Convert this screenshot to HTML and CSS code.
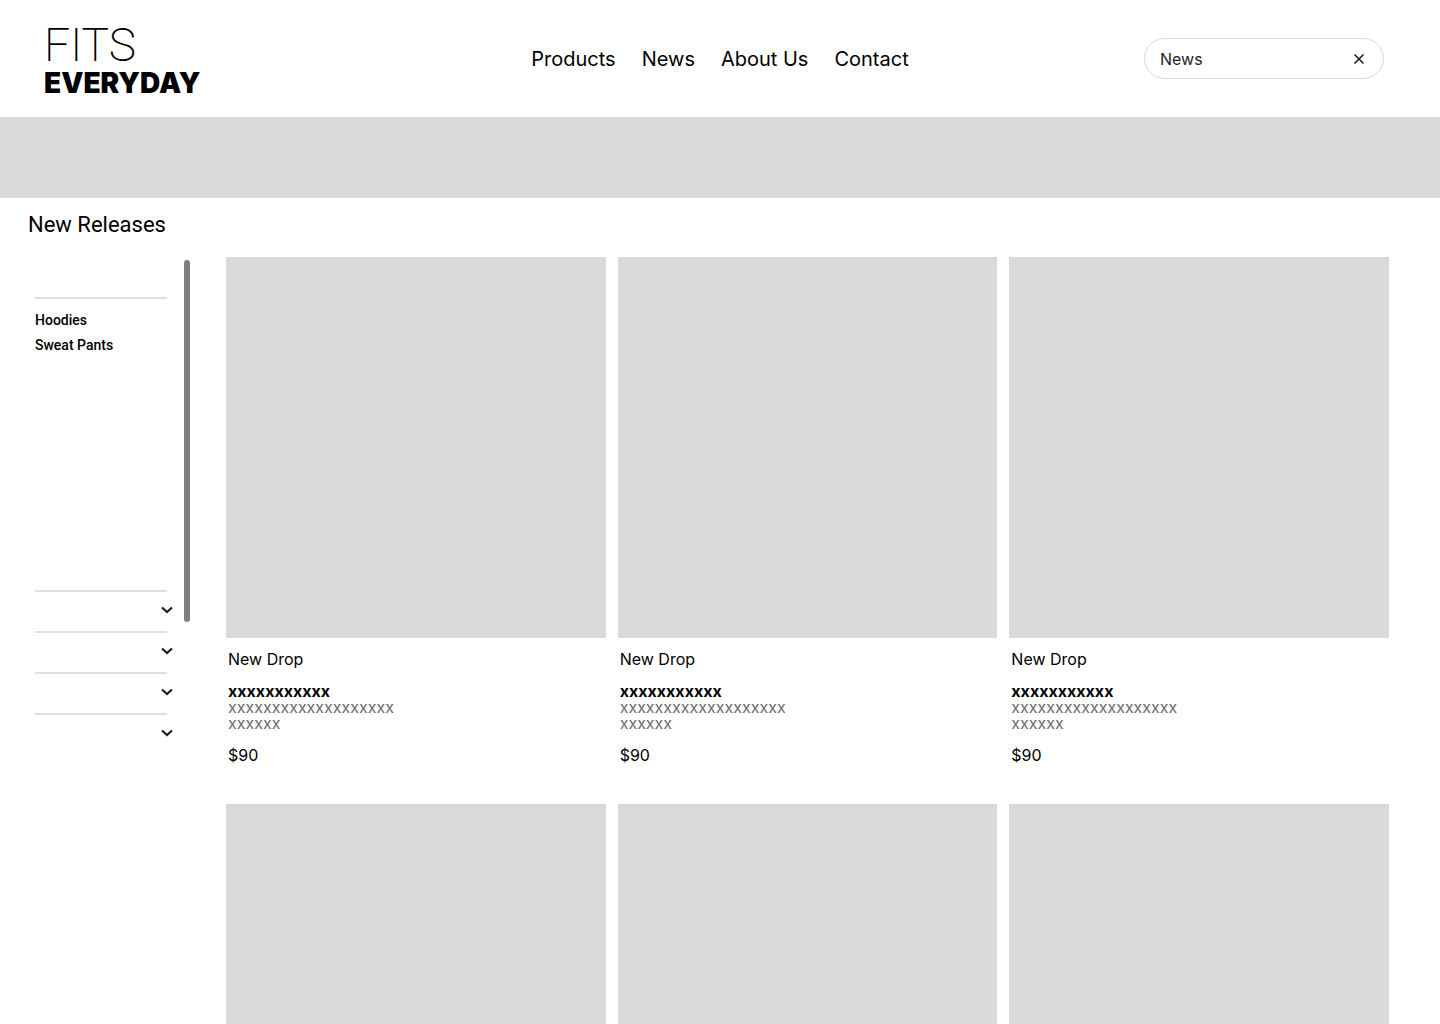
FILE: index.html
```
<!DOCTYPE html>
<html lang="en">
<head>
  <meta charset="UTF-8" />
  <meta name="viewport" content="width=device-width, initial-scale=1.0" />
  <title>Fits Everyday</title>
  <link rel="stylesheet" href="styles.css">
</head>
<body>

  <header class="header">
    <a class="logo" href="#">
      <span class="logo-top">FITS</span>
      <span class="logo-bottom">EVERYDAY</span>
    </a>

    <nav class="nav">
      <a href="#">Products</a>
      <a href="#">News</a>
      <a href="#">About Us</a>
      <a href="#">Contact</a>
    </nav>

    <form class="search">
      <input type="text" value="News" aria-label="Search">
      <button type="reset" aria-label="Clear search">
        <svg width="16" height="16" viewBox="0 0 16 16" fill="none" stroke="#1e1e1e" stroke-width="1.6">
          <path d="M3.5 3.5l9 9M12.5 3.5l-9 9" />
        </svg>
      </button>
    </form>
  </header>

  <div class="banner"></div>

  <main>
    <h1>New Releases</h1>

    <div class="content">
      <aside class="sidebar">
        <div class="filters">
          <section class="filter-open">
            <ul>
              <li><a href="#">Hoodies</a></li>
              <li><a href="#">Sweat Pants</a></li>
            </ul>
          </section>
          <button class="filter" aria-label="Expand filter">
            <svg width="12" height="8" viewBox="0 0 12 8"><path d="M1 1.5l5 4.6 5-4.6" /></svg>
          </button>
          <button class="filter" aria-label="Expand filter">
            <svg width="12" height="8" viewBox="0 0 12 8"><path d="M1 1.5l5 4.6 5-4.6" /></svg>
          </button>
          <button class="filter" aria-label="Expand filter">
            <svg width="12" height="8" viewBox="0 0 12 8"><path d="M1 1.5l5 4.6 5-4.6" /></svg>
          </button>
          <button class="filter" aria-label="Expand filter">
            <svg width="12" height="8" viewBox="0 0 12 8"><path d="M1 1.5l5 4.6 5-4.6" /></svg>
          </button>
        </div>
        <div class="scrollbar"></div>
      </aside>

      <div class="products">
        <article class="card">
          <div class="card-image"></div>
          <div class="card-info">
            <p>New Drop</p>
            <h2>xxxxxxxxxxx</h2>
            <p class="description">xxxxxxxxxxxxxxxxxxx<br>xxxxxx</p>
            <p>$90</p>
          </div>
        </article>
        <article class="card">
          <div class="card-image"></div>
          <div class="card-info">
            <p>New Drop</p>
            <h2>xxxxxxxxxxx</h2>
            <p class="description">xxxxxxxxxxxxxxxxxxx<br>xxxxxx</p>
            <p>$90</p>
          </div>
        </article>
        <article class="card">
          <div class="card-image"></div>
          <div class="card-info">
            <p>New Drop</p>
            <h2>xxxxxxxxxxx</h2>
            <p class="description">xxxxxxxxxxxxxxxxxxx<br>xxxxxx</p>
            <p>$90</p>
          </div>
        </article>
        <article class="card">
          <div class="card-image"></div>
        </article>
        <article class="card">
          <div class="card-image"></div>
        </article>
        <article class="card">
          <div class="card-image"></div>
        </article>
      </div>
    </div>
  </main>

</body>
</html>
```
FILE: styles.css
```
* {
  margin: 0;
  padding: 0;
  box-sizing: border-box;
}

body {
  font-family: 'Inter', sans-serif;
  font-size: 16px;
  background: #fff;
  color: #000;
}

a {
  color: inherit;
  text-decoration: none;
}

button {
  background: none;
  border: none;
  cursor: pointer;
}

/* Header */
.header {
  display: grid;
  grid-template-columns: 1fr auto 1fr;
  align-items: center;
  padding: 18px 44px;
  min-height: 117px;
}

.logo {
  display: flex;
  flex-direction: column;
}

.logo-top {
  font-family: 'Roboto', sans-serif;
  font-size: 46px;
  font-weight: 200;
  line-height: 48px;
}

.logo-bottom {
  font-size: 28px;
  font-weight: 900;
  line-height: 28px;
}

.nav {
  display: flex;
  gap: 26px;
  font-size: 20px;
}

.search {
  display: flex;
  align-items: center;
  justify-self: end;
  width: 240px;
  height: 41px;
  margin-right: 12px;
  padding: 0 16px 0 15px;
  border: 1px solid #d9d9d9;
  border-radius: 21px;
}

.search input {
  flex: 1;
  min-width: 0;
  border: none;
  outline: none;
  background: none;
  font: inherit;
  color: #1e1e1e;
}

.search button {
  display: flex;
}

.banner {
  height: 81px;
  background: #d9d9d9;
}

h1 {
  padding: 13px 28px 18px;
  font-family: 'Roboto', sans-serif;
  font-size: 22px;
  font-weight: 400;
  line-height: 28px;
}

.content {
  display: flex;
  align-items: flex-start;
  gap: 36px;
  padding: 0 51px 0 35px;
}

/* Sidebar */
.sidebar {
  display: flex;
  gap: 11px;
  flex-shrink: 0;
  padding-top: 3px;
}

.filters {
  width: 138px;
  padding-top: 37px;
}

/* divider is a little shorter than the row */
.filter-open::before,
.filter::before {
  content: '';
  display: block;
  width: 132px;
  height: 2px;
  background: #e0e0e0;
}

.filter-open {
  min-height: 293px;
}

.filter-open ul {
  padding-top: 9px;
  list-style: none;
  font-family: 'Roboto', sans-serif;
  font-size: 14px;
  font-weight: 500;
  line-height: 25px;
}

.filter {
  display: flex;
  flex-direction: column;
  gap: 14px;
  width: 100%;
  height: 41px;
}

.filter svg {
  align-self: flex-end;
  fill: none;
  stroke: #1e1e1e;
  stroke-width: 2.2;
}

.scrollbar {
  width: 6px;
  height: 362px;
  border-radius: 3px;
  background: #808080;
}

/* Products */
.products {
  display: grid;
  grid-template-columns: repeat(3, 1fr);
  flex: 1;
  column-gap: 12px;
  row-gap: 41px;
}

.card-image {
  aspect-ratio: 380 / 381;
  background: #d9d9d9;
}

.card-info {
  padding: 13px 2px 0;
  line-height: 16px;
}

.card-info h2 {
  margin-top: 16px;
  font-size: 16px;
  font-weight: 700;
}

.card-info .description {
  margin-bottom: 16px;
  color: #6b6b6b;
}
```
